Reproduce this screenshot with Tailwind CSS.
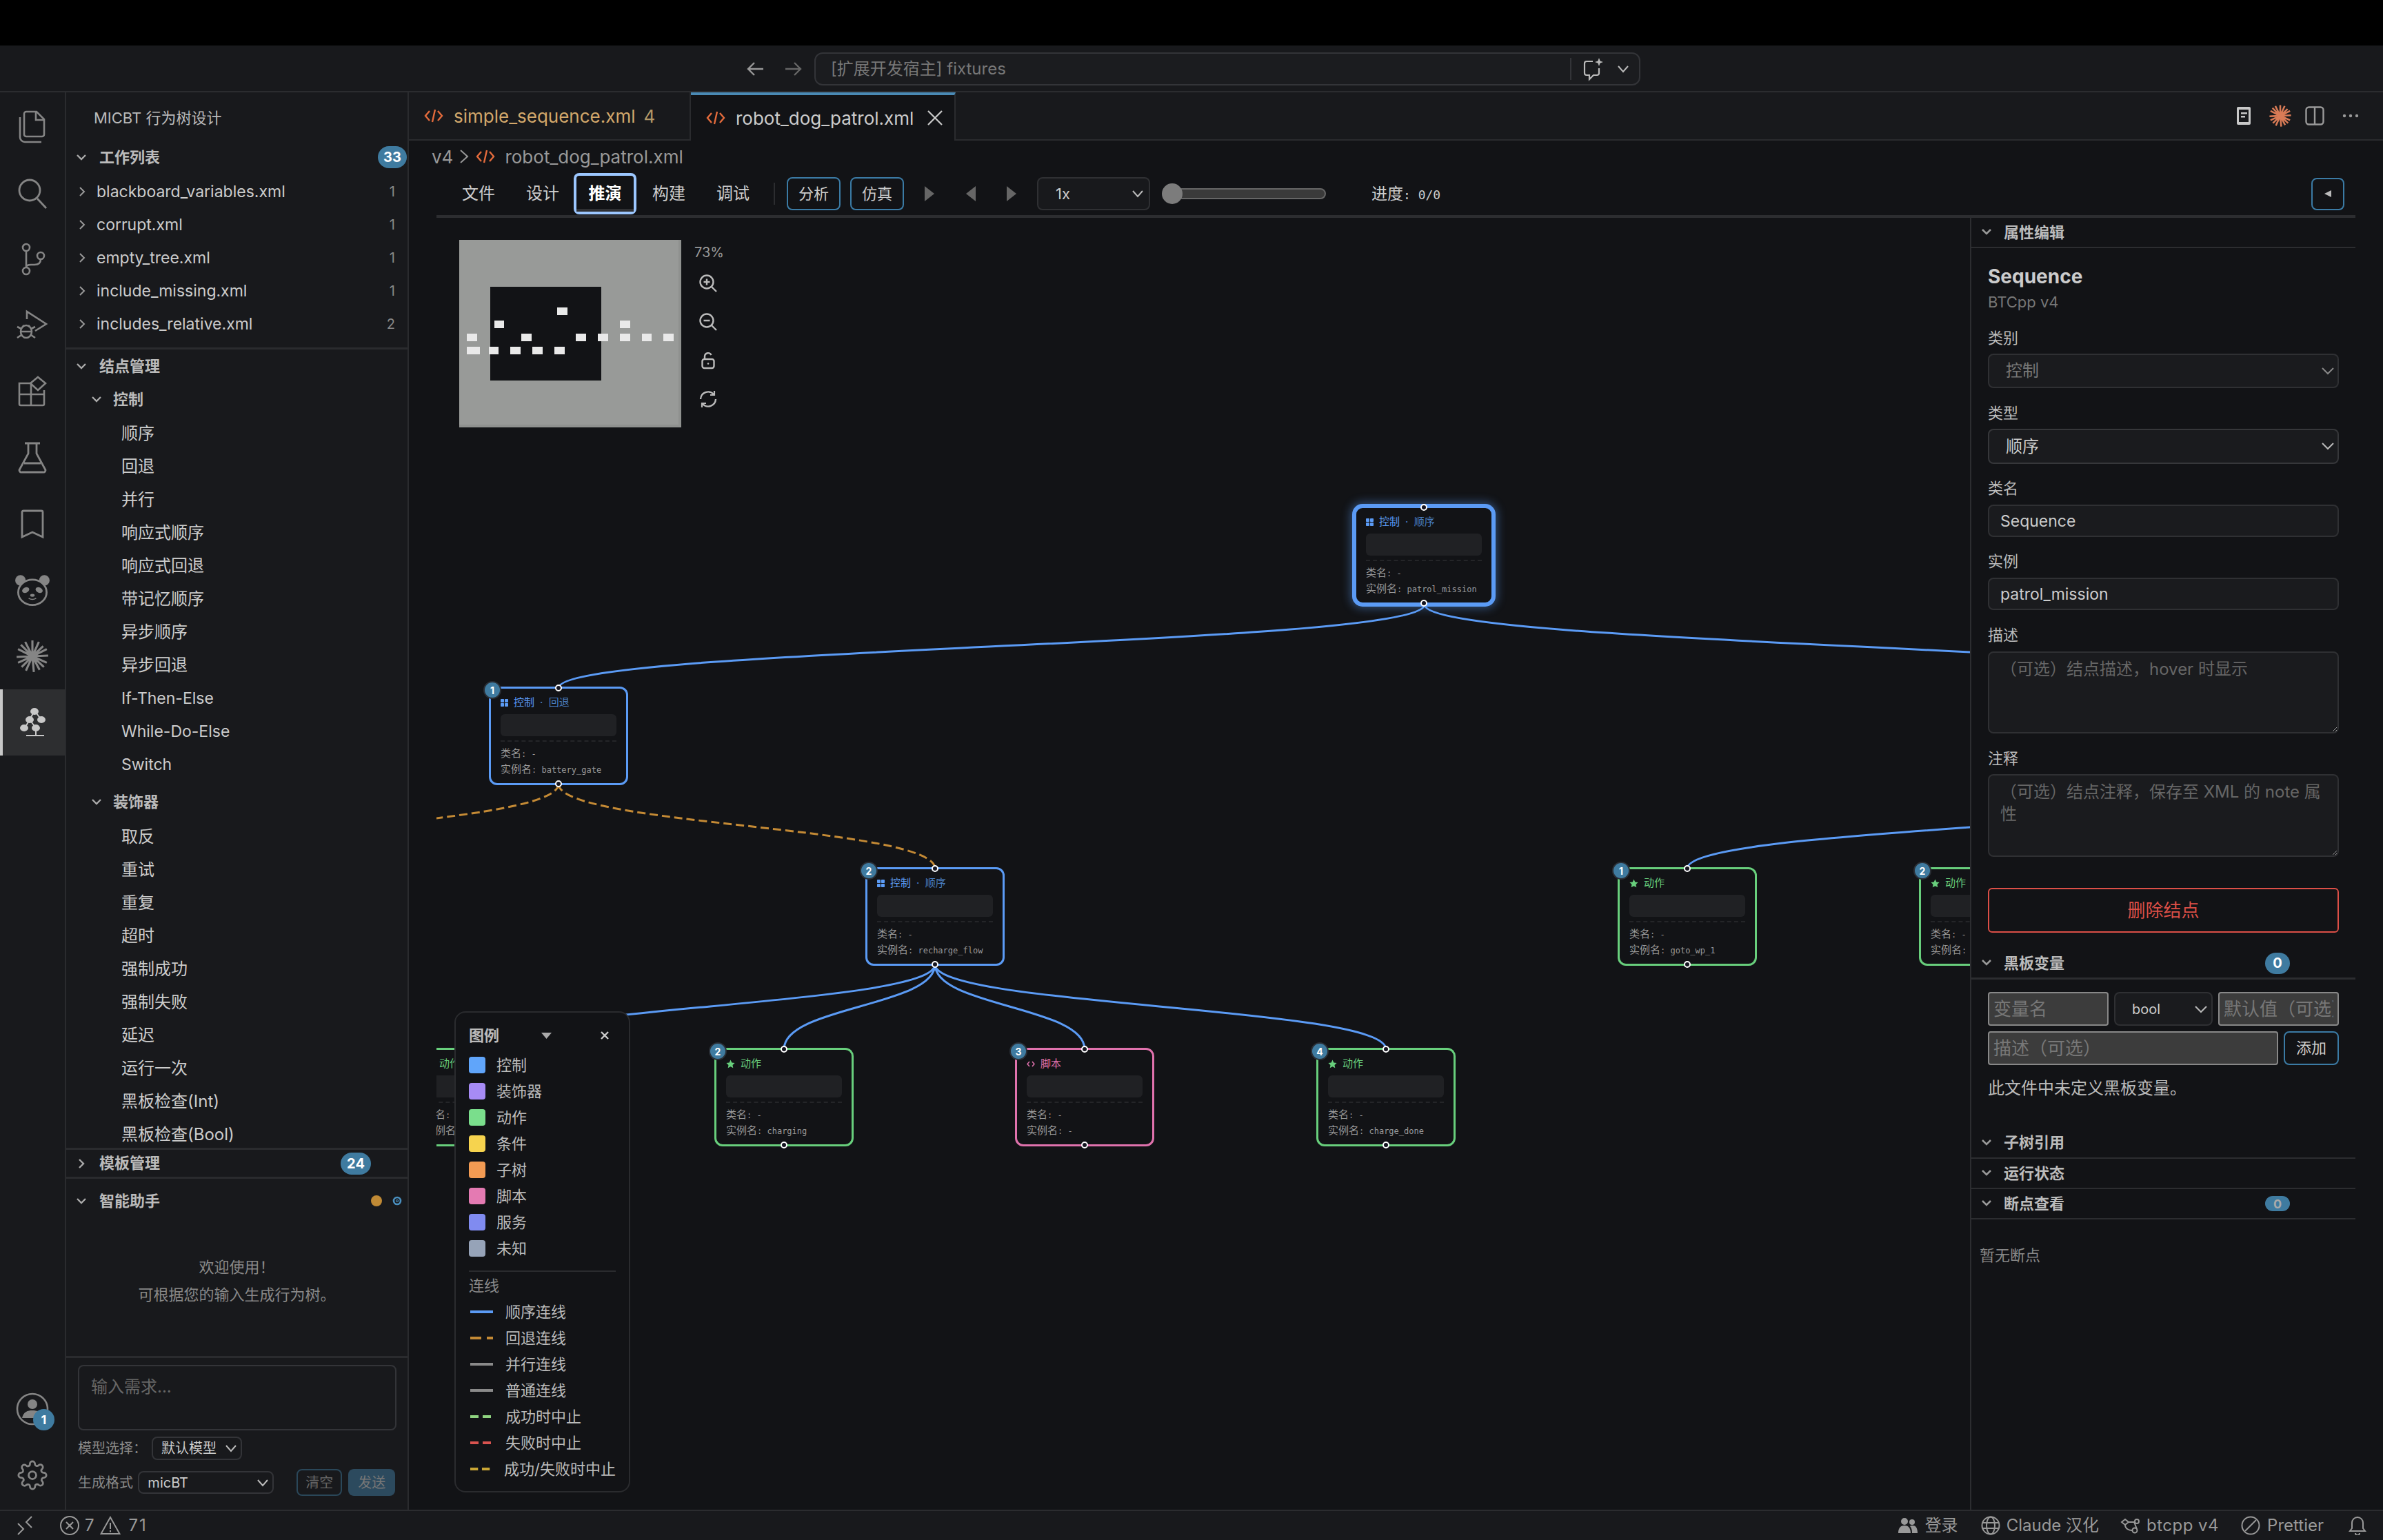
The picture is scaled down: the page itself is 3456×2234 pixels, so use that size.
<!DOCTYPE html>
<html lang="zh-CN">
  <head>
    <meta charset="UTF-8" />
    <title>robot_dog_patrol.xml</title>
    <script src="https://cdn.jsdelivr.net/npm/@tailwindcss/browser@4"></script>
  </head>
  <body class="w-[3456px] h-[2234px] overflow-hidden bg-black flex flex-col font-['Inter','Noto_Sans_CJK_SC',sans-serif] text-[#ccc]">
    <div class="h-[66px] shrink-0 bg-black"></div>

    <!-- title bar -->
    <header class="h-[68px] shrink-0 bg-[#18191c] border-b-2 border-[#2b2c2f] flex items-center pt-[2px]">
      <svg class="ml-[1082px] w-[28px] h-[28px]" viewBox="0 0 28 28" fill="none" stroke="#999" stroke-width="2.4"><path d="M25 14H4M12 5l-9 9 9 9" /></svg>
      <svg class="ml-[26px] w-[28px] h-[28px]" viewBox="0 0 28 28" fill="none" stroke="#666" stroke-width="2.4"><path d="M3 14h21M16 5l9 9-9 9" /></svg>
      <div class="ml-[17px] w-[1198px] h-[48px] border-2 border-[#333438] rounded-[12px] bg-[#1b1c1f] flex items-center pl-[22px]">
        <span class="text-[24px] text-[#777] w-[1072px]">[扩展开发宿主] fixtures</span>
        <div class="w-[2px] h-[32px] bg-[#333438]"></div>
        <svg class="ml-[14px] w-[36px] h-[36px]" viewBox="0 0 36 36" fill="none" stroke="#bbb" stroke-width="2.2"><path d="M17 7H8a3 3 0 0 0-3 3v14a3 3 0 0 0 3 3h4v6l6-6h5a3 3 0 0 0 3-3v-7" /><path d="M26 2l1.600 4.400L32 8l-4.400 1.600L26 14l-1.600-4.400L20 8l4.400-1.600z" fill="#bbb" stroke="none" /></svg>
        <svg class="ml-[16px] w-[18px] h-[18px]" viewBox="0 0 18 18" fill="none" stroke="#bbb" stroke-width="2"><path d="M2 5l7 8 7-8" /></svg>
      </div>
    </header>

    <div class="flex-1 min-h-0 flex">
      <!-- activity bar -->
      <nav class="w-[96px] shrink-0 bg-[#18191c] border-r-2 border-[#2a2b2e] flex flex-col pt-[2px]">
        <div class="h-[96px] flex items-center justify-center">
          <svg class="w-[48px] h-[48px]" viewBox="0 0 48 48" fill="none" stroke="#858585" stroke-width="2.600"><path d="M15 2h15l11 11v22a3 3 0 0 1-3 3H15a3 3 0 0 1-3-3V5a3 3 0 0 1 3-3z" /><path d="M29 2v12h12" /><path d="M6 10v29a7 7 0 0 0 7 7h24" /></svg>
        </div>
        <div class="h-[96px] flex items-center justify-center">
          <svg class="w-[48px] h-[48px]" viewBox="0 0 48 48" fill="none" stroke="#858585" stroke-width="2.800"><circle cx="20" cy="20" r="15" /><path d="M31 32l13 14" /></svg>
        </div>
        <div class="h-[96px] flex items-center justify-center">
          <svg class="w-[48px] h-[48px]" viewBox="0 0 48 48" fill="none" stroke="#858585" stroke-width="2.600"><circle cx="15" cy="7" r="5" /><circle cx="15" cy="41" r="5" /><circle cx="36" cy="19" r="5" /><path d="M15 12v24M36 24c0 6-4 8-9 8H22c-4 0-7 1-7 4" /></svg>
        </div>
        <div class="h-[96px] flex items-center justify-center">
          <svg class="w-[48px] h-[48px]" viewBox="0 0 48 48" fill="none" stroke="#858585" stroke-width="2.600"><path d="M16 15V4l28 18-16 10" /><ellipse cx="15" cy="33" rx="8" ry="9" /><path d="M7 33h16M2 26l6 3M28 26l-6 3M2 42l6-4M28 42l-6-4M10 24l2 2M20 24l-2 2" /></svg>
        </div>
        <div class="h-[96px] flex items-center justify-center">
          <svg class="w-[48px] h-[48px]" viewBox="0 0 48 48" fill="none" stroke="#858585" stroke-width="2.600"><path d="M5 12h17v32H7a2 2 0 0 1-2-2zM5 28h36M22 44h17a2 2 0 0 0 2-2V22" /><path d="M32 3l11 9-11 10-11-10z" /></svg>
        </div>
        <div class="h-[96px] flex items-center justify-center">
          <svg class="w-[48px] h-[48px]" viewBox="0 0 48 48" fill="none" stroke="#858585" stroke-width="2.800"><path d="M13 3h22M18 3v15L6 40a3 3 0 0 0 3 5h30a3 3 0 0 0 3-5L30 18V3M12 32h24" /></svg>
        </div>
        <div class="h-[96px] flex items-center justify-center">
          <svg class="w-[48px] h-[48px]" viewBox="0 0 48 48" fill="none" stroke="#858585" stroke-width="2.800"><path d="M11 5h26a2 2 0 0 1 2 2v36l-15-7-15 7V7a2 2 0 0 1 2-2z" /></svg>
        </div>
        <div class="h-[96px] flex items-center justify-center">
          <svg class="w-[52px] h-[52px]" viewBox="0 0 48 48" fill="#858585" stroke="none"><circle cx="8" cy="11" r="7" /><circle cx="40" cy="11" r="7" /><ellipse cx="24" cy="27" rx="19" ry="17" fill="#18191c" stroke="#858585" stroke-width="2.600" /><ellipse cx="15" cy="24" rx="5" ry="3.500" transform="rotate(-25 15 24)" /><ellipse cx="33" cy="24" rx="5" ry="3.500" transform="rotate(25 33 24)" /><ellipse cx="24" cy="31" rx="3" ry="2" /><path d="M19 35q5 3 10 0" fill="none" stroke="#858585" stroke-width="1.500" /></svg>
        </div>
        <div class="h-[96px] flex items-center justify-center">
          <svg class="w-[50px] h-[50px]" viewBox="0 0 48 48" fill="none" stroke="#858585" stroke-width="3"><path d="M24 24L24 2M24 24l2 22M24 24L2 25M24 24l22-1M24 24L8 8M24 24l15-14M24 24L9 39M24 24l16 15M24 24L14 4M24 24l9-20M24 24L4 14M24 24l20-10M24 24L4 33M24 24l20 9M24 24L15 44M24 24l10 19" /><circle cx="24" cy="24" r="6" fill="#858585" stroke="none" /></svg>
        </div>
        <div class="h-[96px] flex items-center justify-center relative bg-[#2d2e30] border-l-4 border-[#c8c8c8] pr-[4px]">
          <svg class="w-[48px] h-[48px]" viewBox="0 0 48 48" fill="#c8c8c8" stroke="#c8c8c8" stroke-width="2"><path d="M27 7L20 20M27 7l10 13M20 20l-7 12M20 20l9 12M29 32v11M15 43h26" fill="none" /><ellipse cx="27" cy="8" rx="5" ry="4" /><ellipse cx="20" cy="20" rx="5" ry="4" /><ellipse cx="37" cy="20" rx="5" ry="4" /><ellipse cx="12" cy="32" rx="5" ry="4" /><ellipse cx="29" cy="32" rx="5" ry="4" /></svg>
        </div>
        <div class="mt-auto relative h-[97px] flex items-center justify-center">
          <svg class="w-[50px] h-[50px]" viewBox="0 0 50 50" fill="none" stroke="#858585" stroke-width="2.600"><circle cx="25" cy="25" r="22" /><circle cx="25" cy="18" r="7" fill="#858585" stroke="none" /><path d="M10 38c2-9 8-11 15-11s13 2 15 11" fill="#858585" stroke="none" /></svg>
          <span class="absolute left-[48px] top-[49px] w-[31px] h-[31px] rounded-full bg-[#3f7ba0] text-white text-[18px] font-bold flex items-center justify-center">1</span>
        </div>
        <div class="h-[96px] flex items-center justify-center mb-[2px]">
          <svg class="w-[44px] h-[44px]" viewBox="0 0 24 24" fill="none" stroke="#858585" stroke-width="1.500"><circle cx="12" cy="12" r="3" /><path d="M19.400 15a1.650 1.650 0 0 0 .33 1.820l.06.06a2 2 0 1 1-2.830 2.830l-.06-.06a1.650 1.650 0 0 0-2.820 1.170V21a2 2 0 0 1-4 0v-.09a1.650 1.650 0 0 0-2.810-1.170l-.06.06a2 2 0 1 1-2.830-2.830l.06-.06A1.650 1.650 0 0 0 3.090 14H3a2 2 0 0 1 0-4h.09a1.650 1.650 0 0 0 1.170-2.810l-.06-.06a2 2 0 1 1 2.830-2.830l.06.06A1.650 1.650 0 0 0 10 3.090V3a2 2 0 0 1 4 0v.09a1.650 1.650 0 0 0 2.810 1.170l.06-.06a2 2 0 1 1 2.830 2.830l-.06.06A1.650 1.650 0 0 0 20.910 10H21a2 2 0 0 1 0 4h-.09a1.650 1.650 0 0 0-1.510 1z" /></svg>
        </div>
      </nav>

      <!-- side bar -->
      <aside class="w-[497px] shrink-0 bg-[#18191c] border-r-2 border-[#2a2b2e] flex flex-col">
        <div class="h-[70px] flex items-center pl-[40px] pt-[4px] text-[22px] text-[#bbb]">MICBT 行为树设计</div>
        <div class="h-[48px] flex items-center">
          <svg class="ml-[14px] w-[16px] h-[16px]" viewBox="0 0 16 16" fill="none" stroke="#aaa" stroke-width="2.400"><path d="M2 5l6 6 6-6" /></svg>
          <span class="ml-[18px] text-[22px] font-bold text-[#bbb]">工作列表</span>
          <span class="ml-auto mr-[1px] w-[42px] h-[32px] rounded-full bg-[#3f7ba0] text-white text-[20px] font-bold flex items-center justify-center">33</span>
        </div>
        <div id="files" class="pt-[2px] h-[255px] border-b-[3px] border-[#2a2b2e]"></div>
        <div class="h-[1158px] overflow-hidden">
          <div class="h-[48px] flex items-center">
            <svg class="ml-[14px] w-[16px] h-[16px]" viewBox="0 0 16 16" fill="none" stroke="#aaa" stroke-width="2.400"><path d="M2 5l6 6 6-6" /></svg>
            <span class="ml-[18px] text-[22px] font-bold text-[#bbb]">结点管理</span>
          </div>
          <div class="h-[48px] flex items-center">
            <svg class="ml-[36px] w-[16px] h-[16px]" viewBox="0 0 16 16" fill="none" stroke="#aaa" stroke-width="2.400"><path d="M2 5l6 6 6-6" /></svg>
            <span class="ml-[16px] text-[22px] font-bold text-[#bbb]">控制</span>
          </div>
          <div id="control-list" class="pt-[2px]"></div>
          <div class="h-[48px] mt-[6px] flex items-center">
            <svg class="ml-[36px] w-[16px] h-[16px]" viewBox="0 0 16 16" fill="none" stroke="#aaa" stroke-width="2.400"><path d="M2 5l6 6 6-6" /></svg>
            <span class="ml-[16px] text-[22px] font-bold text-[#bbb]">装饰器</span>
          </div>
          <div id="decorator-list" class="pt-[3px]"></div>
        </div>
        <div class="h-[45px] border-t-[3px] border-b-[3px] border-[#2a2b2e] flex items-center relative">
          <svg class="ml-[14px] w-[16px] h-[16px]" viewBox="0 0 16 16" fill="none" stroke="#aaa" stroke-width="2.400"><path d="M5 2l6 6-6 6" /></svg>
          <span class="ml-[18px] text-[22px] font-bold text-[#bbb]">模板管理</span>
          <span class="ml-auto mr-[53px] w-[44px] h-[32px] rounded-full bg-[#3f7ba0] text-white text-[20px] font-bold flex items-center justify-center">24</span>
        </div>
        <div class="h-[257px]">
          <div class="h-[64px] flex items-center">
            <svg class="ml-[14px] w-[16px] h-[16px]" viewBox="0 0 16 16" fill="none" stroke="#aaa" stroke-width="2.400"><path d="M2 5l6 6 6-6" /></svg>
            <span class="ml-[18px] text-[22px] font-bold text-[#bbb]">智能助手</span>
            <span class="ml-auto w-[16px] h-[16px] rounded-full bg-[#c08a35]"></span>
            <svg class="ml-[14px] mr-[7px] w-[16px] h-[16px]" viewBox="0 0 16 16" fill="none" stroke="#4a90c0" stroke-width="2.600"><circle cx="8" cy="8" r="5" /><circle cx="8" cy="8" r="1.500" stroke-width="1.200" /></svg>
          </div>
          <p class="mt-[44px] h-[40px] flex items-center justify-center text-[22px] text-[#888]">欢迎使用！</p>
          <p class="h-[41px] flex items-center justify-center text-[22px] text-[#888]">可根据您的输入生成行为树。</p>
        </div>
        <div class="flex-1 border-t-[3px] border-[#2a2b2e] pl-[17px] pr-[18px] pt-[10px]">
          <textarea class="block w-[462px] h-[95px] bg-[#18191c] border-2 border-[#333438] rounded-[8px] px-[17px] py-[14px] text-[24px] leading-[32px] placeholder:text-[#666] resize-none" placeholder="输入需求..."></textarea>
          <div class="mt-[9px] flex items-center h-[34px]">
            <span class="text-[20px] text-[#888] w-[107px]">模型选择：</span>
            <div class="relative w-[131px]">
              <select class="block w-full h-[34px] appearance-none bg-[#18191c] border-2 border-[#333438] rounded-[8px] pl-[12px] text-[20px] text-[#ccc]"><option>默认模型</option></select>
              <svg class="absolute right-[8px] top-[10px] w-[16px] h-[14px]" viewBox="0 0 16 14" fill="none" stroke="#bbb" stroke-width="2"><path d="M1 3l7 8 7-8" /></svg>
            </div>
          </div>
          <div class="mt-[13px] flex items-center h-[39px]">
            <span class="text-[20px] text-[#888] w-[88px]">生成格式</span>
            <div class="relative w-[198px]">
              <select class="block w-full h-[33px] appearance-none bg-[#18191c] border-2 border-[#333438] rounded-[8px] pl-[12px] text-[20px] text-[#ccc]"><option>micBT</option></select>
              <svg class="absolute right-[8px] top-[10px] w-[16px] h-[14px]" viewBox="0 0 16 14" fill="none" stroke="#bbb" stroke-width="2"><path d="M1 3l7 8 7-8" /></svg>
            </div>
            <button class="ml-[33px] w-[67px] h-[39px] border-2 border-[#2a4759] rounded-[8px] text-[20px] text-[#666]">清空</button>
            <button class="ml-[9px] w-[68px] h-[39px] rounded-[8px] bg-[#2c4a5e] text-[20px] text-[#777]">发送</button>
          </div>
        </div>
      </aside>

      <!-- editor -->
      <main class="flex-1 min-w-0 bg-[#121316] flex flex-col">
        <div class="h-[70px] shrink-0 bg-[#18191c] flex">
          <div class="w-[409px] border-r-2 border-b-2 border-[#2a2b2e] flex items-center pl-[22px]">
            <svg class="w-[28px] h-[24px]" viewBox="0 0 28 24" fill="none" stroke="#e36b3c" stroke-width="2.400"><path d="M8 5L2 12l6 7M20 5l6 7-6 7M16 3l-4 18" /></svg>
            <span class="ml-[15px] text-[26px] text-[#d3a86b]">simple_sequence.xml</span>
            <span class="ml-[12px] text-[26px] text-[#b39868]">4</span>
          </div>
          <div class="w-[384px] bg-[#121316] border-r-2 border-[#2a2b2e] border-t-4 border-t-[#4a8ab5] flex items-center pl-[22px]">
            <svg class="w-[28px] h-[24px]" viewBox="0 0 28 24" fill="none" stroke="#e36b3c" stroke-width="2.400"><path d="M8 5L2 12l6 7M20 5l6 7-6 7M16 3l-4 18" /></svg>
            <span class="ml-[15px] text-[26px] text-[#ccc]">robot_dog_patrol.xml</span>
            <svg class="ml-[18px] w-[26px] h-[26px]" viewBox="0 0 26 26" fill="none" stroke="#ccc" stroke-width="2.200"><path d="M3 3l20 20M23 3L3 23" /></svg>
          </div>
          <div class="flex-1 border-b-2 border-[#2a2b2e] flex items-center">
            <svg class="ml-[1856px] w-[24px] h-[28px]" viewBox="0 0 24 28"><path d="M2 3a2 2 0 0 1 2-2h16a2 2 0 0 1 2 2v22a2 2 0 0 1-2 2H4a2 2 0 0 1-2-2z" fill="#c8c8c8" /><path d="M5 5h14v18H5z" fill="#18191c" /><path d="M8 9h9v2.500H8zM8 14h6v2.500H8z" fill="#c8c8c8" /></svg>
            <svg class="ml-[24px] w-[34px] h-[34px]" viewBox="0 0 48 48" fill="none" stroke="#d97b56" stroke-width="3.600"><path d="M24 24L24 2M24 24l2 22M24 24L2 25M24 24l22-1M24 24L8 8M24 24l15-14M24 24L9 39M24 24l16 15M24 24L14 4M24 24l9-20M24 24L4 14M24 24l20-10M24 24L4 33M24 24l20 9M24 24L15 44M24 24l10 19" /><circle cx="24" cy="24" r="7" fill="#d97b56" stroke="none" /></svg>
            <svg class="ml-[19px] w-[28px] h-[28px]" viewBox="0 0 28 28" fill="none" stroke="#999" stroke-width="2.400"><rect x="1.500" y="1.500" width="25" height="25" rx="4" /><path d="M14 1.500v25" /></svg>
            <svg class="ml-[26px] w-[24px] h-[6px]" viewBox="0 0 24 6" fill="#999"><circle cx="3" cy="3" r="2.200" /><circle cx="12" cy="3" r="2.200" /><circle cx="21" cy="3" r="2.200" /></svg>
          </div>
        </div>

        <!-- breadcrumb -->
        <div class="h-[46px] shrink-0 flex items-center pl-[33px] text-[26px] text-[#999]">
          <span>v4</span>
          <svg class="ml-[9px] w-[14px] h-[24px]" viewBox="0 0 14 24" fill="none" stroke="#999" stroke-width="2"><path d="M2 3l10 9-10 9" /></svg>
          <svg class="ml-[10px] w-[28px] h-[24px]" viewBox="0 0 28 24" fill="none" stroke="#e36b3c" stroke-width="2.400"><path d="M8 5L2 12l6 7M20 5l6 7-6 7M16 3l-4 18" /></svg>
          <span class="ml-[14px]">robot_dog_patrol.xml</span>
        </div>

        <div class="flex-1 min-h-0 mx-[40px] flex flex-col">
          <!-- toolbar -->
          <div class="h-[66px] shrink-0 border-b-4 border-[#2c2d30] flex items-center text-[24px]">
            <span class="ml-[37px] text-[#ccc]">文件</span>
            <span class="ml-[45px] text-[#ccc]">设计</span>
            <span class="ml-[21px] relative w-[91px] h-[60px] border-4 border-[#9cc7ff] rounded-[8px] font-bold text-white flex items-center justify-center">推演
              <span class="absolute left-0 right-0 bottom-0 h-[4px] bg-[#2f3033]"></span>
            </span>
            <span class="ml-[23px] text-[#ccc]">构建</span>
            <span class="ml-[45px] text-[#ccc]">调试</span>
            <div class="ml-[35px] w-[2px] h-[32px] bg-[#2c2d30]"></div>
            <button class="ml-[17px] w-[78px] h-[48px] border-2 border-[#3b7ba5] rounded-[8px] text-[22px] text-[#ccc]">分析</button>
            <button class="ml-[14px] w-[78px] h-[48px] border-2 border-[#3b7ba5] rounded-[8px] text-[22px] text-[#ccc]">仿真</button>
            <svg class="ml-[30px] w-[14px] h-[22px]" viewBox="0 0 14 22" fill="#666"><path d="M0 0l14 11L0 22z" /></svg>
            <svg class="ml-[46px] w-[14px] h-[22px]" viewBox="0 0 14 22" fill="#666"><path d="M14 0L0 11l14 11z" /></svg>
            <svg class="ml-[45px] w-[14px] h-[22px]" viewBox="0 0 14 22" fill="#666"><path d="M0 0l14 11L0 22z" /></svg>
            <div class="ml-[30px] relative w-[164px]">
              <select class="block w-full h-[48px] appearance-none bg-[#18191c] border-2 border-[#2f3033] rounded-[8px] pl-[25px] text-[22px] text-[#ccc]"><option>1x</option></select>
              <svg class="absolute right-[10px] top-[17px] w-[16px] h-[14px]" viewBox="0 0 16 14" fill="none" stroke="#bbb" stroke-width="2"><path d="M1 3l7 8 7-8" /></svg>
            </div>
            <div class="ml-[17px] relative w-[238px] h-[30px] flex items-center">
              <div class="ml-[15px] w-[223px] h-[16px] rounded-r-full bg-[#3a3a3a] border-2 border-[#666]"></div>
              <div class="absolute left-0 top-0 w-[30px] h-[30px] rounded-full bg-[#7c7c7c]"></div>
            </div>
            <span class="ml-[66px] text-[23px] text-[#ccc] font-['DejaVu_Sans_Mono','Noto_Sans_CJK_SC',monospace]">进度<span class="text-[18px]">: 0/0</span></span>
            <button class="ml-auto mr-[16px] w-[48px] h-[47px] border-2 border-[#3b7ba5] rounded-[8px] flex items-center justify-center">
              <svg class="w-[10px] h-[10px]" viewBox="0 0 10 10" fill="#bbb"><path d="M10 0L0 5l10 5z" /></svg>
            </button>
          </div>

          <div class="flex-1 min-h-0 flex">
            <!-- canvas -->
            <section id="canvas" class="flex-1 min-w-0 relative overflow-hidden">
              <svg id="edges" class="absolute left-0 top-0 w-[2224px] h-[1874px]" viewBox="633 316 2224 1874" fill="none" stroke-width="3">
                <path d="M2066 877C2066 938 810 938 810 998" stroke="#5b9bf5" />
                <path d="M2066 877C2066 938 3322 938 3322 998" stroke="#5b9bf5" />
                <path d="M3322 1137C3322 1198 2447 1198 2447 1260" stroke="#5b9bf5" />
                <path d="M810 1137C810 1198 1356 1198 1356 1260" stroke="#c48a35" stroke-dasharray="12 6" />
                <path d="M810 1137C810 1198 264 1198 264 1260" stroke="#c48a35" stroke-dasharray="12 6" />
                <path d="M1356 1399C1356 1460 700 1460 700 1522" stroke="#5b9bf5" />
                <path d="M1356 1399C1356 1460 1137 1460 1137 1522" stroke="#5b9bf5" />
                <path d="M1356 1399C1356 1460 1573 1460 1573 1522" stroke="#5b9bf5" />
                <path d="M1356 1399C1356 1460 2010 1460 2010 1522" stroke="#5b9bf5" />
              </svg>
              <div id="nodes"></div>

              <!-- minimap -->
              <div id="minimap" class="absolute z-20 left-[33px] top-[32px] w-[322px] h-[272px] bg-[#989a98] border-r-4 border-b-4 border-[#8f918f]">
                <div class="absolute left-[45px] top-[68px] w-[161px] h-[136px] bg-[#121316]"></div>
              </div>
              <div class="absolute z-20 left-[374px] top-[35px] text-[20px] text-[#999]">73%</div>
              <div class="absolute z-20 left-[381px] top-[82px] flex flex-col gap-[30px]">
                <svg class="w-[26px] h-[26px]" viewBox="0 0 26 26" fill="none" stroke="#bbb" stroke-width="2.400"><circle cx="11" cy="11" r="9.500" /><path d="M18 18l7 7M6.500 11h9M11 6.500v9" /></svg>
                <svg class="w-[26px] h-[26px]" viewBox="0 0 26 26" fill="none" stroke="#bbb" stroke-width="2.400"><circle cx="11" cy="11" r="9.500" /><path d="M18 18l7 7M6.500 11h9" /></svg>
                <svg class="w-[26px] h-[26px]" viewBox="0 0 26 26" fill="none" stroke="#bbb" stroke-width="2.400"><rect x="4.500" y="11" width="17" height="13" rx="3" /><path d="M8 11V7a5 5 0 0 1 9.500-2" /><circle cx="13" cy="17.500" r="1.300" fill="#bbb" stroke="none" /></svg>
                <svg class="w-[26px] h-[26px]" viewBox="0 0 26 26" fill="none" stroke="#bbb" stroke-width="2.400"><path d="M2 13a11 11 0 0 1 19-7M24 13a11 11 0 0 1-19 7" /><path d="M16 7l6 0 0-6M10 19l-6 0 0 6" stroke-width="2.200" /></svg>
              </div>

              <!-- legend -->
              <div class="absolute z-20 left-[26px] top-[1151px] w-[255px] h-[698px] bg-[#121316] border-2 border-[#2a2b2e] rounded-[16px] px-[19px] pt-[14px]">
                <div class="h-[38px] flex items-center text-[22px] font-bold text-[#bbb]">
                  <span>图例</span>
                  <svg class="ml-[61px] w-[15px] h-[9px]" viewBox="0 0 15 9" fill="#aaa"><path d="M0 0h15L7.500 9z" /></svg>
                  <svg class="ml-auto mr-[10px] w-[12px] h-[12px]" viewBox="0 0 12 12" fill="none" stroke="#ccc" stroke-width="2.400"><path d="M1 1l10 10M11 1L1 11" /></svg>
                </div>
                <div id="legend-nodes" class="mt-[5px]"></div>
                <div class="mt-[13px] h-[2px] bg-[#2a2b2e]"></div>
                <div class="mt-[5px] h-[30px] flex items-center text-[22px] text-[#888]">连线</div>
                <div id="legend-edges" class="mt-[4px]"></div>
              </div>
            </section>

            <!-- property panel -->
            <section class="w-[559px] shrink-0 border-l-2 border-[#2c2d30] flex flex-col">
              <div class="h-[44px] shrink-0 border-b-2 border-[#2c2d30] flex items-center">
                <svg class="ml-[15px] w-[14px] h-[10px]" viewBox="0 0 14 10" fill="none" stroke="#999" stroke-width="2.600"><path d="M1 1l6 6 6-6" /></svg>
                <span class="ml-[18px] text-[22px] font-bold text-[#bbb]">属性编辑</span>
              </div>
              <div class="px-[24px]">
                <h2 class="mt-[23px] h-[36px] flex items-center text-[28px] font-bold text-[#ccc]">Sequence</h2>
                <p class="mt-[5px] h-[28px] flex items-center text-[22px] text-[#777]">BTCpp v4</p>
                <label class="mt-[24px] h-[28px] flex items-center text-[22px] text-[#bbb]">类别</label>
                <div class="mt-[9px] relative">
                  <select disabled class="block w-[509px] h-[50px] appearance-none bg-[#1a1b1e] border-2 border-[#2f3033] rounded-[8px] pl-[24px] text-[24px] text-[#777]"><option>控制</option></select>
                  <svg class="absolute right-[7px] top-[18px] w-[18px] h-[14px]" viewBox="0 0 18 14" fill="none" stroke="#888" stroke-width="2"><path d="M1 3l8 8 8-8" /></svg>
                </div>
                <label class="mt-[22px] h-[28px] flex items-center text-[22px] text-[#bbb]">类型</label>
                <div class="mt-[9px] relative">
                  <select class="block w-[509px] h-[51px] appearance-none bg-[#1a1b1e] border-2 border-[#36373a] rounded-[8px] pl-[24px] text-[24px] text-[#ccc]"><option>顺序</option></select>
                  <svg class="absolute right-[7px] top-[18px] w-[18px] h-[14px]" viewBox="0 0 18 14" fill="none" stroke="#bbb" stroke-width="2"><path d="M1 3l8 8 8-8" /></svg>
                </div>
                <label class="mt-[21px] h-[28px] flex items-center text-[22px] text-[#bbb]">类名</label>
                <input class="mt-[10px] block w-[509px] h-[47px] bg-[#1a1b1e] border-2 border-[#2f3033] rounded-[8px] px-[16px] text-[23px] text-[#ccc]" value="Sequence" />
                <label class="mt-[21px] h-[28px] flex items-center text-[22px] text-[#bbb]">实例</label>
                <input class="mt-[10px] block w-[509px] h-[47px] bg-[#1a1b1e] border-2 border-[#2f3033] rounded-[8px] px-[16px] text-[23px] text-[#ccc]" value="patrol_mission" />
                <label class="mt-[22px] h-[28px] flex items-center text-[22px] text-[#bbb]">描述</label>
                <textarea class="mt-[10px] block w-[509px] h-[119px] bg-[#1a1b1e] border-2 border-[#2f3033] rounded-[8px] px-[16px] py-[8px] text-[24px] leading-[32px] placeholder:text-[#666]" placeholder="（可选）结点描述，hover 时显示"></textarea>
                <label class="mt-[22px] h-[28px] flex items-center text-[22px] text-[#bbb]">注释</label>
                <textarea class="mt-[9px] block w-[509px] h-[120px] bg-[#1a1b1e] border-2 border-[#2f3033] rounded-[8px] px-[16px] py-[8px] text-[24px] leading-[32px] placeholder:text-[#666]" placeholder="（可选）结点注释，保存至 XML 的 note 属性"></textarea>
                <button class="mt-[45px] block w-[509px] h-[65px] border-2 border-[#dc4f47] rounded-[6px] text-[26px] text-[#dc4f47]">删除结点</button>
              </div>
              <div class="mt-[23px] h-[45px] shrink-0 border-b-[3px] border-[#2c2d30] flex items-center">
                <svg class="ml-[15px] w-[14px] h-[10px]" viewBox="0 0 14 10" fill="none" stroke="#999" stroke-width="2.600"><path d="M1 1l6 6 6-6" /></svg>
                <span class="ml-[18px] text-[22px] font-bold text-[#bbb]">黑板变量</span>
                <span class="ml-auto mr-[95px] w-[36px] h-[31px] rounded-full bg-[#3f7ba0] text-white text-[20px] font-bold flex items-center justify-center">0</span>
              </div>
              <div class="px-[24px]">
                <div class="mt-[18px] flex gap-[8px]">
                  <input class="w-[175px] h-[49px] bg-[#3c3c3c] border-2 border-[#888] rounded-[4px] px-[6px] text-[26px] placeholder:text-[#777]" placeholder="变量名" />
                  <div class="relative w-[143px]">
                    <select class="block w-full h-[49px] appearance-none bg-[#1a1b1e] border-2 border-[#2f3033] rounded-[8px] pl-[24px] text-[20px] text-[#ccc]"><option>bool</option></select>
                    <svg class="absolute right-[8px] top-[18px] w-[18px] h-[14px]" viewBox="0 0 18 14" fill="none" stroke="#bbb" stroke-width="2"><path d="M1 3l8 8 8-8" /></svg>
                  </div>
                  <input class="w-[175px] h-[49px] bg-[#3c3c3c] border-2 border-[#888] rounded-[4px] px-[6px] text-[26px] placeholder:text-[#777]" placeholder="默认值（可选）" />
                </div>
                <div class="mt-[8px] flex gap-[8px]">
                  <input class="w-[421px] h-[49px] bg-[#3c3c3c] border-2 border-[#888] rounded-[4px] px-[6px] text-[26px] placeholder:text-[#777]" placeholder="描述（可选）" />
                  <button class="w-[80px] h-[49px] border-2 border-[#3b7ba5] rounded-[8px] text-[22px] text-[#ccc]">添加</button>
                </div>
                <p class="mt-[18px] h-[32px] flex items-center text-[24px] text-[#bbb]">此文件中未定义黑板变量。</p>
              </div>
              <div class="mt-[41px] h-[45px] shrink-0 border-b-2 border-[#2c2d30] flex items-center">
                <svg class="ml-[15px] w-[14px] h-[10px]" viewBox="0 0 14 10" fill="none" stroke="#999" stroke-width="2.600"><path d="M1 1l6 6 6-6" /></svg>
                <span class="ml-[18px] text-[22px] font-bold text-[#bbb]">子树引用</span>
              </div>
              <div class="h-[44px] shrink-0 border-b-2 border-[#2c2d30] flex items-center">
                <svg class="ml-[15px] w-[14px] h-[10px]" viewBox="0 0 14 10" fill="none" stroke="#999" stroke-width="2.600"><path d="M1 1l6 6 6-6" /></svg>
                <span class="ml-[18px] text-[22px] font-bold text-[#bbb]">运行状态</span>
              </div>
              <div class="h-[44px] shrink-0 border-b-2 border-[#2c2d30] flex items-center">
                <svg class="ml-[15px] w-[14px] h-[10px]" viewBox="0 0 14 10" fill="none" stroke="#999" stroke-width="2.600"><path d="M1 1l6 6 6-6" /></svg>
                <span class="ml-[18px] text-[22px] font-bold text-[#bbb]">断点查看</span>
                <span class="ml-auto mr-[95px] w-[36px] h-[22px] rounded-full bg-[#3f7ba0] text-[#aaa] text-[18px] font-bold flex items-center justify-center">0</span>
              </div>
              <p class="mt-[38px] ml-[12px] h-[28px] flex items-center text-[22px] text-[#888]">暂无断点</p>
            </section>
          </div>
        </div>
      </main>
    </div>

    <!-- status bar -->
    <footer class="h-[44px] shrink-0 bg-[#18191c] border-t-2 border-[#2b2c2f] flex items-center text-[24px] text-[#999]">
      <svg class="ml-[24px] w-[24px] h-[30px]" viewBox="0 0 24 30" fill="none" stroke="#999" stroke-width="2"><path d="M2 12l8 8-8 8M22 2l-8 8 8 8" /></svg>
      <svg class="ml-[38px] w-[30px] h-[30px]" viewBox="0 0 30 30" fill="none" stroke="#999" stroke-width="2"><circle cx="15" cy="15" r="13" /><path d="M10 10l10 10M20 10L10 20" /></svg>
      <span class="ml-[7px]">7</span>
      <svg class="ml-[8px] w-[30px] h-[30px]" viewBox="0 0 30 30" fill="none" stroke="#999" stroke-width="2"><path d="M15 3L1.500 27h27zM15 11v9M15 22v2.500" /></svg>
      <span class="ml-[12px] tracking-[0.08em]">71</span>
      <div class="ml-auto flex items-center">
        <svg class="w-[30px] h-[26px]" viewBox="0 0 30 26" fill="#999"><circle cx="10" cy="7" r="5" /><circle cx="21" cy="8" r="4" /><path d="M1 24c0-8 4-11 9-11s9 3 9 11zM21 24c0-5-1-8-3-10 1-1 2-1 4-1 4 0 7 3 7 11z" /></svg>
        <span class="ml-[10px]">登录</span>
      </div>
      <svg class="ml-[33px] w-[28px] h-[28px]" viewBox="0 0 28 28" fill="none" stroke="#999" stroke-width="2"><circle cx="14" cy="14" r="12.500" /><ellipse cx="14" cy="14" rx="6" ry="12.500" /><path d="M2 10h24M2 18h24" /></svg>
      <span class="ml-[9px]">Claude 汉化</span>
      <svg class="ml-[31px] w-[28px] h-[24px]" viewBox="0 0 28 24" fill="none" stroke="#999" stroke-width="2"><path d="M2 7l5-4 5 4-5 4zM12 7h8l4 10M7 11c0 6 6 8 10 8" /><circle cx="24" cy="6" r="3" /><circle cx="21" cy="19" r="3.500" /></svg>
      <span class="ml-[10px] tracking-[0.02em]">btcpp v4</span>
      <svg class="ml-[32px] w-[28px] h-[28px]" viewBox="0 0 28 28" fill="none" stroke="#999" stroke-width="2"><circle cx="14" cy="14" r="12.500" /><path d="M6 22L22 6" /></svg>
      <span class="ml-[10px]">Prettier</span>
      <svg class="ml-[36px] mr-[24px] w-[26px] h-[28px]" viewBox="0 0 26 28" fill="none" stroke="#999" stroke-width="2"><path d="M13 2a8 8 0 0 0-8 8v8l-3 4h22l-3-4v-8a8 8 0 0 0-8-8zM10 25a3 3 0 0 0 6 0" /></svg>
    </footer>

    <script>
      const canvasX = 633, canvasY = 316;

      // sidebar lists
      const fileRow = ([name, count]) => `
        <div class="h-[48px] flex items-center">
          <svg class="ml-[18px] w-[10px] h-[18px]" viewBox="0 0 10 18" fill="none" stroke="#999" stroke-width="2"><path d="M2 3l6 6-6 6" /></svg>
          <span class="ml-[16px] text-[23px] text-[#ccc]">${name}</span>
          <span class="ml-auto mr-[18px] text-[20px] text-[#888]">${count}</span>
        </div>`;
      const leafRow = (name) => {
        // latin labels run a little narrower than the chinese ones in the reference
        const size = /^[\x00-\x7f]+$/.test(name) ? "text-[23px]" : "text-[24px]";
        return `<div class="h-[48px] flex items-center pl-[80px] ${size} text-[#ccc]">${name}</div>`;
      };

      document.getElementById("files").innerHTML = [
        ["blackboard_variables.xml", 1],
        ["corrupt.xml", 1],
        ["empty_tree.xml", 1],
        ["include_missing.xml", 1],
        ["includes_relative.xml", 2],
      ].map(fileRow).join("");
      document.getElementById("control-list").innerHTML = [
        "顺序", "回退", "并行", "响应式顺序", "响应式回退", "带记忆顺序",
        "异步顺序", "异步回退", "If-Then-Else", "While-Do-Else", "Switch",
      ].map(leafRow).join("");
      document.getElementById("decorator-list").innerHTML = [
        "取反", "重试", "重复", "超时", "强制成功", "强制失败", "延迟",
        "运行一次", "黑板检查(Int)", "黑板检查(Bool)",
      ].map(leafRow).join("");

      // legend
      document.getElementById("legend-nodes").innerHTML = [
        ["#60a5fa", "控制"], ["#a78bf5", "装饰器"], ["#7ade8c", "动作"], ["#f6d34e", "条件"],
        ["#f39b53", "子树"], ["#e47ab2", "脚本"], ["#808bf0", "服务"], ["#96a3b8", "未知"],
      ].map(([color, label]) => `
        <div class="h-[38px] flex items-center">
          <span class="w-[24px] h-[24px] rounded-[4px]" style="background:${color}"></span>
          <span class="ml-[16px] text-[22px] text-[#bbb]">${label}</span>
        </div>`).join("");
      document.getElementById("legend-edges").innerHTML = [
        ["#5b9bf5", "none", "顺序连线"], ["#c48a35", "16 8", "回退连线"], ["#8a8a8a", "none", "并行连线"],
        ["#8a8a8a", "none", "普通连线"], ["#8fd480", "12 6", "成功时中止"], ["#d9534f", "12 6", "失败时中止"],
        ["#c9a635", "12 6", "成功/失败时中止"],
      ].map(([color, dash, label]) => `
        <div class="h-[38px] flex items-center">
          <svg class="ml-[2px] w-[33px] h-[4px]" viewBox="0 0 33 4"><line x1="0" y1="2" x2="33" y2="2" stroke="${color}" stroke-width="4" stroke-dasharray="${dash}" /></svg>
          <span class="ml-[18px] text-[22px] text-[#bbb] whitespace-nowrap">${label}</span>
        </div>`).join("");

      // minimap blocks, in canvas coordinates of the zoomed map
      const mapBlocks = [
        [505, 378, 44], [231, 435, 42], [777, 435, 45], [111, 492, 45], [348, 492, 45],
        [585, 492, 45], [681, 492, 45], [777, 492, 45], [873, 492, 42], [966, 492, 45],
        [111, 549, 57], [207, 549, 42], [300, 549, 45], [396, 549, 45], [492, 549, 45],
      ];
      document.getElementById("minimap").insertAdjacentHTML("beforeend", mapBlocks.map(([x, y, w]) =>
        `<div class="absolute h-[11px] bg-[#e9e9e9]" style="left:${(x - 78) / 3}px;top:${(y - 84) / 3}px;width:${w / 3}px"></div>`
      ).join(""));

      // tree nodes
      const controlBorder = "border-[#5b9bf5]", actionBorder = "border-[#68cf7c]", scriptBorder = "border-[#e072ad]";
      const gridIcon = `<svg class="w-[11px] h-[11px]" viewBox="0 0 11 11" fill="#5b9bf5"><rect width="5" height="5" rx=".8" /><rect x="6" width="5" height="5" rx=".8" /><rect y="6" width="5" height="5" rx=".8" /><rect x="6" y="6" width="5" height="5" rx=".8" /></svg>`;
      const starIcon = `<svg class="w-[13px] h-[13px]" viewBox="0 0 24 24" fill="#68cf7c"><path d="M12 1l3.400 7.300 7.900 1-5.800 5.500 1.500 8L12 18.900l-7 3.900 1.500-8L.7 9.300l7.900-1z" /></svg>`;
      const codeIcon = `<svg class="w-[12px] h-[11px]" viewBox="0 0 12 11" fill="none" stroke="#e072ad" stroke-width="1.500"><path d="M4 2L1 5.500 4 9M8 2l3 3.500L8 9" /></svg>`;
      const kinds = {
        control: { border: controlBorder, icon: gridIcon, head: "text-[#5b9bf5]" },
        action: { border: actionBorder, icon: starIcon, head: "text-[#68cf7c]" },
        script: { border: scriptBorder, icon: codeIcon, head: "text-[#e072ad]" },
      };
      const nodes = [
        { x: 1964, y: 734, kind: "control", title: "控制", sub: "顺序", name: "patrol_mission", selected: true },
        { x: 709, y: 996, kind: "control", title: "控制", sub: "回退", name: "battery_gate", badge: 1 },
        { x: 1255, y: 1258, kind: "control", title: "控制", sub: "顺序", name: "recharge_flow", badge: 2 },
        { x: 2346, y: 1258, kind: "action", title: "动作", name: "goto_wp_1", badge: 1 },
        { x: 2783, y: 1258, kind: "action", title: "动作", name: "goto_wp_2", badge: 2 },
        { x: 599, y: 1520, kind: "action", title: "动作", name: "-", badge: 1 },
        { x: 1036, y: 1520, kind: "action", title: "动作", name: "charging", badge: 2 },
        { x: 1472, y: 1520, kind: "script", title: "脚本", name: "-", badge: 3 },
        { x: 1909, y: 1520, kind: "action", title: "动作", name: "charge_done", badge: 4 },
      ];
      const port = (pos) => `<span class="absolute left-1/2 -translate-x-1/2 ${pos} w-[10px] h-[10px] rounded-full border-2 border-white bg-[#14141f] z-10"></span>`;
      document.getElementById("nodes").innerHTML = nodes.map((n) => {
        const k = kinds[n.kind];
        const glow = n.selected ? "shadow-[0_0_0_3px_#5b9bf5,0_0_14px_5px_rgba(91,155,245,0.45)]" : "";
        return `
        <div class="absolute w-[202px] h-[143px] box-border border-[3px] ${k.border} rounded-[12px] bg-[#121316] px-[14px] pt-[8px] ${glow}" style="left:${n.x - canvasX}px;top:${n.y - canvasY}px">
          ${port("top-[-6px]")}${port("bottom-[-6px]")}
          ${n.badge ? `<span class="absolute left-[-11px] top-[-11px] w-[22px] h-[22px] box-content rounded-full border-2 border-[#2a2f36] bg-[#3f7ba0] text-white text-[14px] font-bold flex items-center justify-center z-10">${n.badge}</span>` : ""}
          <div class="h-[24px] flex items-center gap-[8px] text-[15px] ${k.head}">
            ${k.icon}<span>${n.title}</span>${n.sub ? `<span class="text-[#4a7fc4] whitespace-pre">·  ${n.sub}</span>` : ""}
          </div>
          <div class="mt-[5px] h-[32px] rounded-[6px] bg-[#202124]"></div>
          <div class="mt-[6px] pt-[6px] border-t-2 border-dashed border-[#242528] text-[15px] leading-[22px] text-[#999] whitespace-nowrap overflow-hidden font-['DejaVu_Sans_Mono','Noto_Sans_CJK_SC',monospace]">
            <div>类名<span class="text-[12px]">: -</span></div>
            <div>实例名<span class="text-[12px]">: ${n.name}</span></div>
          </div>
        </div>`;
      }).join("");
    </script>
  </body>
</html>
